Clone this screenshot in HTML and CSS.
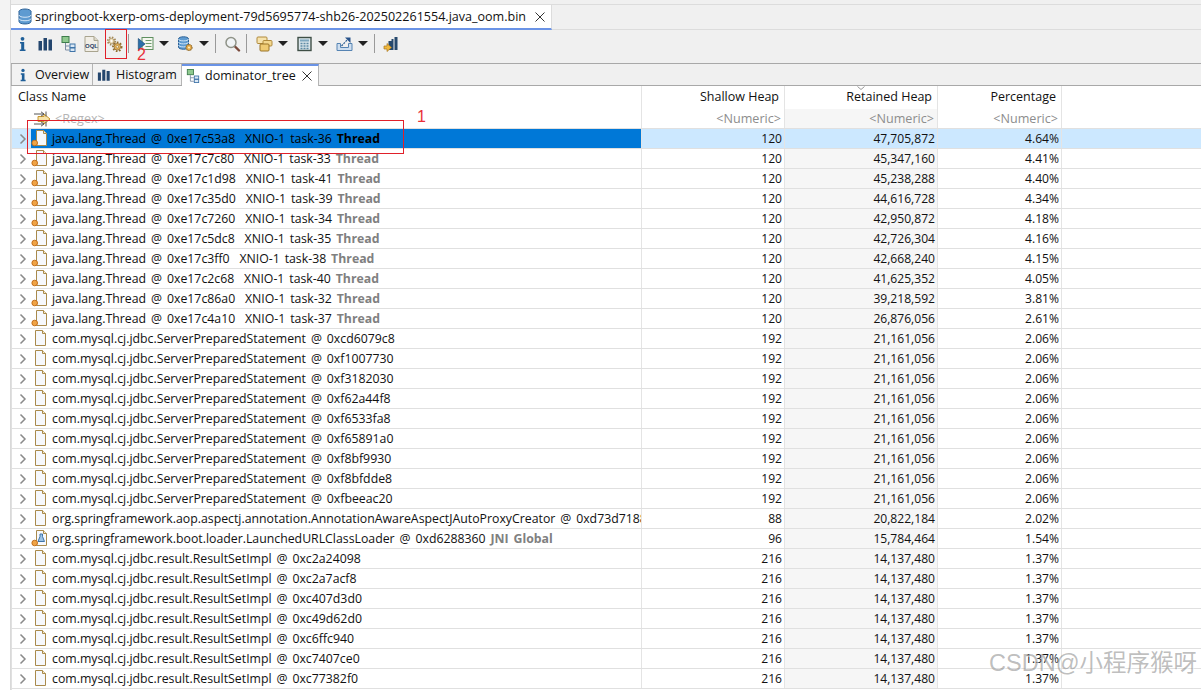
FILE: index.html
```html
<!DOCTYPE html>
<html lang="en">
<head>
<meta charset="utf-8">
<title>dominator_tree</title>
<link rel="stylesheet" href="styles.css">
</head>
<body>
<svg class="defs" width="0" height="0" aria-hidden="true">
  <defs>
    <symbol id="i-info" viewBox="0 0 16 16"><circle cx="8" cy="2.800" r="1.900" fill="#1f5f99"/><path d="M5.500 6h4.200v7.400h1.300V15H5.300v-1.600h1.400V7.600H5.500z" fill="#1f5f99"/></symbol>
    <symbol id="i-bars" viewBox="0 0 16 16"><path d="M1 5h3.500v9.500H1zM6 2h3.500v12.500H6zM11 3.500h3.500v11H11z" fill="#24466e"/></symbol>
    <symbol id="i-tree" viewBox="0 0 16 16"><rect x="1.500" y=".5" width="7" height="6" fill="#8fc98f" stroke="#3e7d4c"/><path d="M5 7v7h4M5 10h4" fill="none" stroke="#7c8da3"/><rect x="9.500" y="8" width="5" height="3.500" fill="#dbe8f5" stroke="#3f74a8"/><rect x="9.500" y="12" width="5" height="3.500" fill="#dbe8f5" stroke="#3f74a8"/></symbol>
    <symbol id="i-oql" viewBox="0 0 16 16"><path d="M1.500.5h9l4 4v11h-13z" fill="#f1eee6" stroke="#a9a48f"/><path d="M10.500.5V4.500h4" fill="#dcd8c8" stroke="#a9a48f"/><text x="8" y="11.500" class="oql">OQL</text></symbol>
    <symbol id="i-gears" viewBox="0 0 16 16"><circle cx="5" cy="5" r="3.700" fill="none" stroke="#a58a58" stroke-width="1.800" stroke-dasharray="1.500 1.400"/><circle cx="5" cy="5" r="2.600" fill="#f0e2c2" stroke="#a58a58" stroke-width=".8"/><circle cx="5" cy="5" r=".9" fill="#fff"/><circle cx="10.800" cy="10.800" r="4.300" fill="none" stroke="#8f6b2c" stroke-width="1.800" stroke-dasharray="1.700 1.500"/><circle cx="10.800" cy="10.800" r="3.300" fill="#e9b65e" stroke="#8f6b2c" stroke-width=".8"/><circle cx="10.800" cy="10.800" r="1.300" fill="#fdf3d4" stroke="#8f6b2c" stroke-width=".6"/></symbol>
    <symbol id="i-run" viewBox="0 0 16 16"><rect x="4.500" y="1.500" width="11" height="12" fill="#f4f7ef" stroke="#5f8f5f"/><path d="M8 4.500h6M8 7.500h6M8 10.500h6" stroke="#6b9a6b"/><path d="M.8 2.500 7.500 8 .8 13.500z" fill="#2a6fa8" stroke="#1b4c7a" stroke-width=".7"/></symbol>
    <symbol id="i-db" viewBox="0 0 16 16"><path d="M1 3c0-3 10-3 10 0v8c0 3-10 3-10 0z" fill="#5e9bd1" stroke="#2e6398"/><path d="M1 3c0 2.500 10 2.500 10 0M1 6c0 2.500 10 2.500 10 0M1 9c0 2.500 10 2.500 10 0" fill="none" stroke="#cfe3f5"/><circle cx="11.500" cy="11.500" r="3" fill="#e8ae4e" stroke="#8a6425" stroke-width="1.200" stroke-dasharray="1.300 .7"/><circle cx="11.500" cy="11.500" r="1" fill="#fff2c9"/></symbol>
    <symbol id="i-search" viewBox="0 0 16 16"><path d="M10 10l4.500 4.500" stroke="#7a4a3c" stroke-width="2.400" stroke-linecap="round"/><circle cx="6.500" cy="6.500" r="5" fill="#f1f4f6" stroke="#8f9388" stroke-width="1.500"/></symbol>
    <symbol id="i-copies" viewBox="0 0 16 16"><rect x=".5" y="1" width="10" height="6.500" rx="1" fill="#f6e3ae" stroke="#b08a3c"/><rect x="6.500" y="4.500" width="9" height="5.500" rx="1" fill="#f3d88f" stroke="#b08a3c"/><rect x="3.500" y="8" width="9" height="7" rx="1" fill="#efcb73" stroke="#9a7428"/></symbol>
    <symbol id="i-calc" viewBox="0 0 16 16"><rect x="1.500" y="1.500" width="13" height="13" fill="#d9e5ea" stroke="#3f4f46" stroke-width="1.400"/><rect x="3.500" y="3.500" width="9" height="2" fill="#7fa8c0"/><path d="M4 7.500h2M7 7.500h2M10 7.500h2M4 10h2M7 10h2M10 10h2M4 12.500h2M7 12.500h2M10 12.500h2" stroke="#5e8aa5" stroke-width="1.300"/></symbol>
    <symbol id="i-export" viewBox="0 0 16 16"><path d="M.5 7.500h3.500v4h8v-4h3.500v7H.5z" fill="#cfdff0" stroke="#5684b3"/><path d="M5 10 11 3.500" stroke="#2d5f94" stroke-width="1.200" stroke-dasharray="2 1"/><path d="M8.500 1.500H14V7z" fill="#27528a"/></symbol>
    <symbol id="i-chart" viewBox="0 0 16 16"><path d="M5 5h3v9H5zM11 1h3v13h-3zM8 3h2v11H8z" fill="#27496d"/><path d="M.5 10h3V7.500L8 11.500l-4.500 4V13h-3z" fill="#efb93f" stroke="#a9761d" stroke-width=".7"/></symbol>
    <symbol id="i-heap" viewBox="0 0 16 16"><ellipse cx="8" cy="3" rx="6" ry="2.500" fill="#5e9bd1" stroke="#2e6398"/><path d="M2 3v10c0 3.300 12 3.300 12 0V3" fill="#5e9bd1" stroke="#2e6398"/><path d="M2 6.500c0 3 12 3 12 0M2 10c0 3 12 3 12 0" fill="none" stroke="#d5e6f6"/></symbol>
    <symbol id="i-chevron" viewBox="0 0 8 12"><path d="M1.500 1.500 6 6l-4.500 4.500" fill="none" stroke="#8a8a8a" stroke-width="1.500"/></symbol>
    <symbol id="i-close" viewBox="0 0 10 10"><path d="M.5.500l9 9M9.500.500l-9 9" fill="none" stroke="#333" stroke-width="1"/></symbol>
    <symbol id="i-doc" viewBox="0 0 16 18"><path d="M3.500 1.500h7l3 3v12h-10z" fill="#f6f8fc" stroke="#a98a4c"/><path d="M10.500 1.500v3h3" fill="#f5e9c8" stroke="#a98a4c"/></symbol>
    <symbol id="i-thread" viewBox="0 0 18 18"><path d="M5.500 1.500h7l3 3v12h-10z" fill="#f6f8fc" stroke="#a98a4c"/><path d="M12.500 1.500v3h3" fill="#f5e9c8" stroke="#a98a4c"/><circle cx="3.700" cy="14" r="2.800" fill="#f0a446" stroke="#c4701c"/></symbol>
    <symbol id="i-loader" viewBox="0 0 18 18"><path d="M5.500 1.500h7l3 3v12h-10z" fill="#f6f8fc" stroke="#a98a4c"/><path d="M12.500 1.500v3h3" fill="#f5e9c8" stroke="#a98a4c"/><path d="M9 5h2.500v2.500l2 5h-6.500l2-5z" fill="#9cc3e6" stroke="#3f74a8"/><circle cx="3.700" cy="14" r="2.800" fill="#f0a446" stroke="#c4701c"/></symbol>
    <symbol id="i-filter" viewBox="0 0 18 16"><path d="M5 5.500h6V3l6 5-6 5v-2.500H5z" fill="#f7e3a8" stroke="#c8962e"/><path d="M1 3h10M8 .8 11 3 8 5.200M13 .5v5M1 13h10M8 10.800 11 13l-3 2.200M13 10.500v5" fill="none" stroke="#555"/></symbol>
  </defs>
</svg>

<div class="shell">
  <div class="gutter"></div>
  <main class="pane">
    <div class="editor-tabs">
      <div class="editor-tab">
        <svg class="ico-tab"><use href="#i-heap"/></svg>
        <span>springboot-kxerp-oms-deployment-79d5695774-shb26-202502261554.java_oom.bin</span>
        <svg class="ico-close"><use href="#i-close"/></svg>
      </div>
    </div>
    <div class="toolbar">
      <svg class="tool"><use href="#i-info"/></svg>
      <svg class="tool"><use href="#i-bars"/></svg>
      <svg class="tool"><use href="#i-tree"/></svg>
      <svg class="tool"><use href="#i-oql"/></svg>
      <svg class="tool"><use href="#i-gears"/></svg>
      <span class="sep"></span>
      <svg class="tool"><use href="#i-run"/></svg>
      <span class="drop"></span>
      <svg class="tool"><use href="#i-db"/></svg>
      <span class="drop"></span>
      <span class="sep"></span>
      <svg class="tool"><use href="#i-search"/></svg>
      <span class="sep sep-wide"></span>
      <svg class="tool"><use href="#i-copies"/></svg>
      <span class="drop"></span>
      <svg class="tool"><use href="#i-calc"/></svg>
      <span class="drop"></span>
      <svg class="tool"><use href="#i-export"/></svg>
      <span class="drop"></span>
      <span class="sep"></span>
      <svg class="tool"><use href="#i-chart"/></svg>
    </div>
    <div class="view-tabs">
      <div class="view-tab tab-overview"><svg class="ico-view"><use href="#i-info"/></svg><span>Overview</span></div>
      <div class="view-tab tab-histogram"><svg class="ico-view"><use href="#i-bars"/></svg><span>Histogram</span></div>
      <div class="view-tab tab-active"><svg class="ico-view"><use href="#i-tree"/></svg><span>dominator_tree</span><svg class="ico-close"><use href="#i-close"/></svg></div>
    </div>
    <div class="table">
      <div class="row head">
        <div class="cell hname">Class Name</div>
        <div class="cell hnum">Shallow Heap</div>
        <div class="cell hnum sorted-head"><svg class="sort" viewBox="0 0 8 4"><path d="M.5.500 4 3.500 7.500.500" fill="none" stroke="#999"/></svg>Retained Heap</div>
        <div class="cell hnum">Percentage</div>
        <div class="cell blank"></div>
      </div>
      <div class="row filter">
        <div class="cell fname"><svg class="ico-filter"><use href="#i-filter"/></svg><span>&lt;Regex&gt;</span></div>
        <div class="cell fnum">&lt;Numeric&gt;</div>
        <div class="cell fnum sorted">&lt;Numeric&gt;</div>
        <div class="cell fnum">&lt;Numeric&gt;</div>
        <div class="cell blank"></div>
      </div>

      <div class="row selected"><div class="cell name"><svg class="chev"><use href="#i-chevron"/></svg><div class="main"><svg class="ico"><use href="#i-thread"/></svg><span class="label">java.lang.Thread @ 0xe17c53a8  XNIO-1 task-36 <b>Thread</b></span></div></div><div class="cell num">120</div><div class="cell num sorted">47,705,872</div><div class="cell num">4.64%</div><div class="cell blank"></div></div>
      <div class="row"><div class="cell name"><svg class="chev"><use href="#i-chevron"/></svg><div class="main"><svg class="ico"><use href="#i-thread"/></svg><span class="label">java.lang.Thread @ 0xe17c7c80  XNIO-1 task-33 <b>Thread</b></span></div></div><div class="cell num">120</div><div class="cell num sorted">45,347,160</div><div class="cell num">4.41%</div><div class="cell blank"></div></div>
      <div class="row"><div class="cell name"><svg class="chev"><use href="#i-chevron"/></svg><div class="main"><svg class="ico"><use href="#i-thread"/></svg><span class="label">java.lang.Thread @ 0xe17c1d98  XNIO-1 task-41 <b>Thread</b></span></div></div><div class="cell num">120</div><div class="cell num sorted">45,238,288</div><div class="cell num">4.40%</div><div class="cell blank"></div></div>
      <div class="row"><div class="cell name"><svg class="chev"><use href="#i-chevron"/></svg><div class="main"><svg class="ico"><use href="#i-thread"/></svg><span class="label">java.lang.Thread @ 0xe17c35d0  XNIO-1 task-39 <b>Thread</b></span></div></div><div class="cell num">120</div><div class="cell num sorted">44,616,728</div><div class="cell num">4.34%</div><div class="cell blank"></div></div>
      <div class="row"><div class="cell name"><svg class="chev"><use href="#i-chevron"/></svg><div class="main"><svg class="ico"><use href="#i-thread"/></svg><span class="label">java.lang.Thread @ 0xe17c7260  XNIO-1 task-34 <b>Thread</b></span></div></div><div class="cell num">120</div><div class="cell num sorted">42,950,872</div><div class="cell num">4.18%</div><div class="cell blank"></div></div>
      <div class="row"><div class="cell name"><svg class="chev"><use href="#i-chevron"/></svg><div class="main"><svg class="ico"><use href="#i-thread"/></svg><span class="label">java.lang.Thread @ 0xe17c5dc8  XNIO-1 task-35 <b>Thread</b></span></div></div><div class="cell num">120</div><div class="cell num sorted">42,726,304</div><div class="cell num">4.16%</div><div class="cell blank"></div></div>
      <div class="row"><div class="cell name"><svg class="chev"><use href="#i-chevron"/></svg><div class="main"><svg class="ico"><use href="#i-thread"/></svg><span class="label">java.lang.Thread @ 0xe17c3ff0  XNIO-1 task-38 <b>Thread</b></span></div></div><div class="cell num">120</div><div class="cell num sorted">42,668,240</div><div class="cell num">4.15%</div><div class="cell blank"></div></div>
      <div class="row"><div class="cell name"><svg class="chev"><use href="#i-chevron"/></svg><div class="main"><svg class="ico"><use href="#i-thread"/></svg><span class="label">java.lang.Thread @ 0xe17c2c68  XNIO-1 task-40 <b>Thread</b></span></div></div><div class="cell num">120</div><div class="cell num sorted">41,625,352</div><div class="cell num">4.05%</div><div class="cell blank"></div></div>
      <div class="row"><div class="cell name"><svg class="chev"><use href="#i-chevron"/></svg><div class="main"><svg class="ico"><use href="#i-thread"/></svg><span class="label">java.lang.Thread @ 0xe17c86a0  XNIO-1 task-32 <b>Thread</b></span></div></div><div class="cell num">120</div><div class="cell num sorted">39,218,592</div><div class="cell num">3.81%</div><div class="cell blank"></div></div>
      <div class="row"><div class="cell name"><svg class="chev"><use href="#i-chevron"/></svg><div class="main"><svg class="ico"><use href="#i-thread"/></svg><span class="label">java.lang.Thread @ 0xe17c4a10  XNIO-1 task-37 <b>Thread</b></span></div></div><div class="cell num">120</div><div class="cell num sorted">26,876,056</div><div class="cell num">2.61%</div><div class="cell blank"></div></div>

      <div class="row"><div class="cell name"><svg class="chev"><use href="#i-chevron"/></svg><div class="main"><svg class="ico"><use href="#i-doc"/></svg><span class="label">com.mysql.cj.jdbc.ServerPreparedStatement @ 0xcd6079c8</span></div></div><div class="cell num">192</div><div class="cell num sorted">21,161,056</div><div class="cell num">2.06%</div><div class="cell blank"></div></div>
      <div class="row"><div class="cell name"><svg class="chev"><use href="#i-chevron"/></svg><div class="main"><svg class="ico"><use href="#i-doc"/></svg><span class="label">com.mysql.cj.jdbc.ServerPreparedStatement @ 0xf1007730</span></div></div><div class="cell num">192</div><div class="cell num sorted">21,161,056</div><div class="cell num">2.06%</div><div class="cell blank"></div></div>
      <div class="row"><div class="cell name"><svg class="chev"><use href="#i-chevron"/></svg><div class="main"><svg class="ico"><use href="#i-doc"/></svg><span class="label">com.mysql.cj.jdbc.ServerPreparedStatement @ 0xf3182030</span></div></div><div class="cell num">192</div><div class="cell num sorted">21,161,056</div><div class="cell num">2.06%</div><div class="cell blank"></div></div>
      <div class="row"><div class="cell name"><svg class="chev"><use href="#i-chevron"/></svg><div class="main"><svg class="ico"><use href="#i-doc"/></svg><span class="label">com.mysql.cj.jdbc.ServerPreparedStatement @ 0xf62a44f8</span></div></div><div class="cell num">192</div><div class="cell num sorted">21,161,056</div><div class="cell num">2.06%</div><div class="cell blank"></div></div>
      <div class="row"><div class="cell name"><svg class="chev"><use href="#i-chevron"/></svg><div class="main"><svg class="ico"><use href="#i-doc"/></svg><span class="label">com.mysql.cj.jdbc.ServerPreparedStatement @ 0xf6533fa8</span></div></div><div class="cell num">192</div><div class="cell num sorted">21,161,056</div><div class="cell num">2.06%</div><div class="cell blank"></div></div>
      <div class="row"><div class="cell name"><svg class="chev"><use href="#i-chevron"/></svg><div class="main"><svg class="ico"><use href="#i-doc"/></svg><span class="label">com.mysql.cj.jdbc.ServerPreparedStatement @ 0xf65891a0</span></div></div><div class="cell num">192</div><div class="cell num sorted">21,161,056</div><div class="cell num">2.06%</div><div class="cell blank"></div></div>
      <div class="row"><div class="cell name"><svg class="chev"><use href="#i-chevron"/></svg><div class="main"><svg class="ico"><use href="#i-doc"/></svg><span class="label">com.mysql.cj.jdbc.ServerPreparedStatement @ 0xf8bf9930</span></div></div><div class="cell num">192</div><div class="cell num sorted">21,161,056</div><div class="cell num">2.06%</div><div class="cell blank"></div></div>
      <div class="row"><div class="cell name"><svg class="chev"><use href="#i-chevron"/></svg><div class="main"><svg class="ico"><use href="#i-doc"/></svg><span class="label">com.mysql.cj.jdbc.ServerPreparedStatement @ 0xf8bfdde8</span></div></div><div class="cell num">192</div><div class="cell num sorted">21,161,056</div><div class="cell num">2.06%</div><div class="cell blank"></div></div>
      <div class="row"><div class="cell name"><svg class="chev"><use href="#i-chevron"/></svg><div class="main"><svg class="ico"><use href="#i-doc"/></svg><span class="label">com.mysql.cj.jdbc.ServerPreparedStatement @ 0xfbeeac20</span></div></div><div class="cell num">192</div><div class="cell num sorted">21,161,056</div><div class="cell num">2.06%</div><div class="cell blank"></div></div>

      <div class="row"><div class="cell name"><svg class="chev"><use href="#i-chevron"/></svg><div class="main"><svg class="ico"><use href="#i-doc"/></svg><span class="label">org.springframework.aop.aspectj.annotation.AnnotationAwareAspectJAutoProxyCreator @ 0xd73d7188</span></div></div><div class="cell num">88</div><div class="cell num sorted">20,822,184</div><div class="cell num">2.02%</div><div class="cell blank"></div></div>
      <div class="row"><div class="cell name"><svg class="chev"><use href="#i-chevron"/></svg><div class="main"><svg class="ico"><use href="#i-loader"/></svg><span class="label">org.springframework.boot.loader.LaunchedURLClassLoader @ 0xd6288360 <b>JNI Global</b></span></div></div><div class="cell num">96</div><div class="cell num sorted">15,784,464</div><div class="cell num">1.54%</div><div class="cell blank"></div></div>

      <div class="row"><div class="cell name"><svg class="chev"><use href="#i-chevron"/></svg><div class="main"><svg class="ico"><use href="#i-doc"/></svg><span class="label">com.mysql.cj.jdbc.result.ResultSetImpl @ 0xc2a24098</span></div></div><div class="cell num">216</div><div class="cell num sorted">14,137,480</div><div class="cell num">1.37%</div><div class="cell blank"></div></div>
      <div class="row"><div class="cell name"><svg class="chev"><use href="#i-chevron"/></svg><div class="main"><svg class="ico"><use href="#i-doc"/></svg><span class="label">com.mysql.cj.jdbc.result.ResultSetImpl @ 0xc2a7acf8</span></div></div><div class="cell num">216</div><div class="cell num sorted">14,137,480</div><div class="cell num">1.37%</div><div class="cell blank"></div></div>
      <div class="row"><div class="cell name"><svg class="chev"><use href="#i-chevron"/></svg><div class="main"><svg class="ico"><use href="#i-doc"/></svg><span class="label">com.mysql.cj.jdbc.result.ResultSetImpl @ 0xc407d3d0</span></div></div><div class="cell num">216</div><div class="cell num sorted">14,137,480</div><div class="cell num">1.37%</div><div class="cell blank"></div></div>
      <div class="row"><div class="cell name"><svg class="chev"><use href="#i-chevron"/></svg><div class="main"><svg class="ico"><use href="#i-doc"/></svg><span class="label">com.mysql.cj.jdbc.result.ResultSetImpl @ 0xc49d62d0</span></div></div><div class="cell num">216</div><div class="cell num sorted">14,137,480</div><div class="cell num">1.37%</div><div class="cell blank"></div></div>
      <div class="row"><div class="cell name"><svg class="chev"><use href="#i-chevron"/></svg><div class="main"><svg class="ico"><use href="#i-doc"/></svg><span class="label">com.mysql.cj.jdbc.result.ResultSetImpl @ 0xc6ffc940</span></div></div><div class="cell num">216</div><div class="cell num sorted">14,137,480</div><div class="cell num">1.37%</div><div class="cell blank"></div></div>
      <div class="row"><div class="cell name"><svg class="chev"><use href="#i-chevron"/></svg><div class="main"><svg class="ico"><use href="#i-doc"/></svg><span class="label">com.mysql.cj.jdbc.result.ResultSetImpl @ 0xc7407ce0</span></div></div><div class="cell num">216</div><div class="cell num sorted">14,137,480</div><div class="cell num">1.37%</div><div class="cell blank"></div></div>
      <div class="row"><div class="cell name"><svg class="chev"><use href="#i-chevron"/></svg><div class="main"><svg class="ico"><use href="#i-doc"/></svg><span class="label">com.mysql.cj.jdbc.result.ResultSetImpl @ 0xc77382f0</span></div></div><div class="cell num">216</div><div class="cell num sorted">14,137,480</div><div class="cell num">1.37%</div><div class="cell blank"></div></div>
    </div>
  </main>
</div>

<div class="mark mark-row"></div>
<div class="mark mark-tool"></div>
<div class="mark-num num-one">1</div>
<div class="mark-num num-two">2</div>
<div class="watermark">CSDN@小程序猴呀</div>
</body>
</html>
```
FILE: styles.css
```css
* { box-sizing: border-box; }
html, body { margin: 0; height: 690px; overflow: hidden; }
body {
  position: relative;
  background: #fff;
  color: #111;
  font-family: "Open Sans", "Noto Sans", "Liberation Sans", sans-serif;
  font-size: 12px;
  line-height: 16px;
}
.defs { position: absolute; }
.shell { display: flex; height: 690px; }
.gutter {
  width: 11px;
  flex: none;
  height: 100%;
  background: linear-gradient(#f3f3f3 0 30px, #fff 30px);
  border-right: 1px solid #d9d9d9;
}
.pane { flex: 1; min-width: 0; display: flex; flex-direction: column; padding-top: 4px; background: #f0f0f0; }

.editor-tabs { height: 26px; display: flex; border-top: 1px solid #dcdcdc; border-bottom: 1px solid #dcdcdc; flex: none; }
.editor-tab {
  width: 541px; height: 25px; background: #fff; display: flex; align-items: center; padding-left: 6px;
  border-bottom: 2px solid #6a93e6; border-right: 1px solid #dcdcdc; font-size: 12.55px; white-space: nowrap;
}
.ico-tab { width: 16px; height: 17px; margin-right: 2px; flex: none; }
.ico-close { width: 10px; height: 10px; flex: none; margin-left: 9px; }

.toolbar { height: 34px; flex: none; display: flex; align-items: center; border-bottom: 1px solid #a8a8a8; padding-bottom: 6px; }
.tool { width: 23px; height: 16px; flex: none; }
.sep { width: 1px; height: 19px; background: #9a9a9a; margin: 0 5px 0 2px; flex: none; }
.sep-wide { margin-right: 6px; }
.drop { width: 0; height: 0; border: 5px solid transparent; border-top: 5px solid #222; border-bottom: 0; margin: 0 5px 0 2px; flex: none; }
.drop + .sep { margin-left: 1px; }

.view-tabs { height: 22px; flex: none; display: flex; border-bottom: 1px solid #a8a8a8; }
.view-tab { display: flex; align-items: center; height: 21px; border-right: 1px solid #b5b5b5; background: #f2f2f2; font-size: 12.5px; padding-left: 4px; white-space: nowrap; }
.tab-overview { width: 82px; border-left: 1px solid #b5b5b5; }
.tab-histogram { width: 89px; }
.tab-active { width: 137px; height: 22px; background: #fff; border-top: 2px solid #6a93e6; position: relative; z-index: 1; }
.ico-view { width: 14px; height: 14px; margin-right: 5px; flex: none; }
.tab-active .ico-close { margin-left: 6px; }

.table { flex: 1; min-height: 0; background: #fff; overflow: hidden; border-left: 1px solid #e0e0e0; }
.row { display: grid; grid-template-columns: 630px 143px 153px 124px 1fr; height: 20px; border-bottom: 1px solid #e0e0e0; }
.cell { border-right: 1px solid #e4e4e4; min-width: 0; white-space: nowrap; overflow: hidden; line-height: 19px; }
.blank { border-right: 0; }
.head { height: 23px; border-bottom: 0; font-size: 12.5px; }
.hname { padding-left: 6px; line-height: 21px; }
.hnum { text-align: right; padding-right: 5px; line-height: 22px; position: relative; }
.sort { position: absolute; top: 0; left: 72px; width: 8px; height: 4px; }
.filter { height: 20px; color: #8d8d8d; font-size: 12.6px; }
.fname { display: flex; align-items: center; padding-left: 21px; color: #b5b5b5; }
.ico-filter { width: 18px; height: 16px; flex: none; margin-right: 4px; }
.fnum { text-align: right; padding-right: 3px; }
.num { text-align: right; padding-right: 2px; color: #111; font-size: 12.1px; }
.sorted { background: #f6f6f6; }

.name { display: flex; }
.chev { width: 8px; height: 12px; margin: 4px 0 0 7px; flex: none; }
.main { flex: 1; min-width: 0; display: flex; margin-left: 4px; height: 19px; overflow: hidden; }
.ico { width: 18px; height: 18px; flex: none; margin-right: 3px; }
.label { white-space: pre; font-size: 12.3px; word-spacing: 1.7px; }
.label b { color: #808080; font-weight: 700; }
.selected { background: #cce8ff; }
.selected .sorted { background: #cce8ff; }
.selected .main { background: #0078d7; }
.selected .label, .selected .label b { color: #000; }

.oql { font: 700 6px "Liberation Sans", sans-serif; text-anchor: middle; fill: #2d3f66; }

.mark { position: absolute; border: 1px solid #e0202a; pointer-events: none; }
.mark-row { left: 27px; top: 120px; width: 377px; height: 34px; }
.mark-tool { left: 105px; top: 29px; width: 22px; height: 30px; }
.mark-num { position: absolute; color: #e8303a; font: 16px/18px "Liberation Sans", sans-serif; }
.num-one { left: 417px; top: 108px; }
.num-two { left: 137px; top: 46px; }
.watermark {
  position: absolute; right: 4px; top: 647px;
  font: 23.5px/32px "Liberation Sans", "Noto Sans CJK SC", sans-serif;
  color: rgba(110, 110, 110, .45);
  text-shadow: 1px 1px 1px rgba(255, 255, 255, .6);
  white-space: nowrap;
}
```
